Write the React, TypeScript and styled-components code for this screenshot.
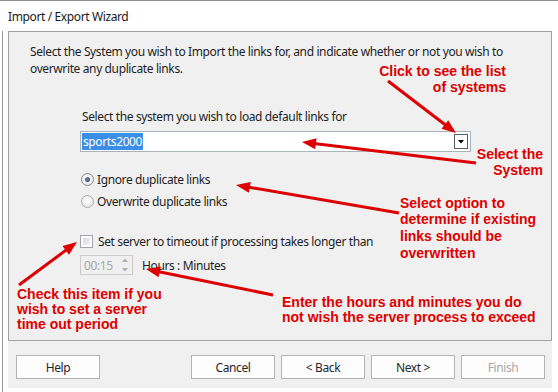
import React from 'react';
import styled, { createGlobalStyle } from 'styled-components';

const UI_FONT = `"Noto Sans", "DejaVu Sans", sans-serif`;
const NOTE_FONT = `"Liberation Sans", Arial, sans-serif`;
const RED = '#dd0000';
const UI_SPACING = '-0.38px';

const Global = createGlobalStyle`
  html, body { margin: 0; padding: 0; background: #ffffff; }
  body { font-family: ${UI_FONT}; }
  * { box-sizing: border-box; }
`;

const Window = styled.div`
  position: relative;
  width: 558px;
  height: 392px;
  border-top: 1px solid #8f8f8f;
  background: #ffffff;
  overflow: hidden;
  font-family: ${UI_FONT};
  font-size: 12px;
  letter-spacing: ${UI_SPACING};
  color: #1e1e1e;
`;

const TitleBar = styled.div`
  height: 30px;
  display: flex;
  align-items: center;
  padding-left: 8px;
  color: #1a1a1a;
`;

const Body = styled.div`
  display: flex;
  height: 361px;
  margin-left: 2px;
  border-left: 1px solid #9a9a9a;
  padding-left: 5px;
`;

const Column = styled.div`
  width: 544px;
  height: 357px;
  display: flex;
  flex-direction: column;
  background: #f0f0f0;
`;

const Panel = styled.div`
  height: 310px;
  border: 1px solid #a0a0a0;
  padding: 11px 0 0 21px;
  display: flex;
  flex-direction: column;
`;

const Intro = styled.p`
  margin: 0;
  line-height: 17px;
  white-space: nowrap;
`;

const Form = styled.div`
  margin-left: 50px;
  display: flex;
  flex-direction: column;
`;

const FieldLabel = styled.div`
  margin-top: 31px;
  margin-left: 2px;
  line-height: 17px;
`;

const Combo = styled.div`
  margin-top: 6px;
  width: 391px;
  height: 21px;
  border: 1px solid #acb2bc;
  background: #ffffff;
  display: flex;
  align-items: center;
  justify-content: space-between;
  padding: 0 2px 0 1px;
`;

const Selected = styled.span`
  background: #3a8ee6;
  color: #ffffff;
  height: 17px;
  line-height: 17px;
  padding: 0 1px;
`;

const DropButton = styled.div`
  width: 14px;
  height: 15px;
  border: 1px solid #5c5c5c;
  background: #ffffff;
  display: flex;
  align-items: center;
  justify-content: center;
`;

const RadioGroup = styled.div`
  margin-top: 16px;
  display: flex;
  flex-direction: column;
`;

const OptionRow = styled.label`
  height: 22px;
  display: flex;
  align-items: center;
  gap: 3px;
  padding-left: 1px;
`;

const Radio = styled.span<{ $on?: boolean }>`
  width: 13px;
  height: 13px;
  border-radius: 50%;
  border: 1px solid ${(p) => (p.$on ? '#8a8c90' : '#a9abae')};
  background: radial-gradient(circle at 50% 40%, #ffffff 0%, #f3f3f3 45%, #dcdcdc 100%);
  display: flex;
  align-items: center;
  justify-content: center;
  &::after {
    content: '';
    display: ${(p) => (p.$on ? 'block' : 'none')};
    width: 5px;
    height: 5px;
    border-radius: 50%;
    background: radial-gradient(circle at 40% 35%, #6f83a8 0%, #2f4470 100%);
  }
`;

const CheckRow = styled.label`
  margin-top: 19px;
  height: 20px;
  display: flex;
  align-items: center;
  gap: 5px;
`;

const CheckBox = styled.span`
  width: 13px;
  height: 13px;
  border: 1px solid #a2a4a7;
  background: #ffffff;
  padding: 2px;
  &::after {
    content: '';
    display: block;
    width: 100%;
    height: 100%;
    background: linear-gradient(135deg, #d9dadc, #f2f2f3);
  }
`;

const SpinRow = styled.div`
  margin-top: 4px;
  height: 20px;
  display: flex;
  align-items: center;
  gap: 9px;
`;

const Spinner = styled.div`
  width: 53px;
  height: 20px;
  border: 1px solid #cccccc;
  background: #f0f0f0;
  display: flex;
  align-items: center;
  justify-content: space-between;
  padding: 0 4px 0 3px;
  color: #a6a6a6;
`;

const Footer = styled.div`
  height: 47px;
  display: flex;
  align-items: flex-start;
  padding: 14px 7px 0 8px;
  gap: 6px;
`;

const Button = styled.button<{ $disabled?: boolean; $push?: boolean }>`
  width: 84px;
  height: 24px;
  border: 1px solid #b3b3b3;
  background: #fdfdfd;
  font-family: ${UI_FONT};
  font-size: 12px;
  letter-spacing: ${UI_SPACING};
  color: ${(p) => (p.$disabled ? '#a8a8a8' : '#262626')};
  padding: 0;
  margin-right: ${(p) => (p.$push ? 'auto' : '0')};
`;

const Note = styled.div<{
  $top: number;
  $left?: number;
  $right?: number;
  $lh: number;
  $align?: 'left' | 'right';
}>`
  position: absolute;
  top: ${(p) => p.$top}px;
  ${(p) => (p.$left !== undefined ? `left: ${p.$left}px;` : '')}
  ${(p) => (p.$right !== undefined ? `right: ${p.$right}px;` : '')}
  font-family: ${NOTE_FONT};
  font-weight: bold;
  font-size: 14px;
  letter-spacing: 0;
  line-height: ${(p) => p.$lh}px;
  color: ${RED};
  text-align: ${(p) => p.$align || 'left'};
  white-space: nowrap;
`;

const Overlay = styled.svg`
  position: absolute;
  left: 0;
  top: 0;
  pointer-events: none;
`;

type Arrow = { x1: number; y1: number; x2: number; y2: number };

const arrows: Arrow[] = [
  { x1: 388, y1: 80, x2: 456, y2: 132 },
  { x1: 476, y1: 162, x2: 302, y2: 141 },
  { x1: 399, y1: 212, x2: 236, y2: 184 },
  { x1: 19, y1: 284, x2: 77, y2: 241 },
  { x1: 273, y1: 294, x2: 146, y2: 268 },
];

function ArrowShape({ a }: { a: Arrow }) {
  const dx = a.x2 - a.x1;
  const dy = a.y2 - a.y1;
  const len = Math.hypot(dx, dy);
  const ux = dx / len;
  const uy = dy / len;
  const headLen = 14;
  const headW = 5.5;
  const bx = a.x2 - ux * headLen;
  const by = a.y2 - uy * headLen;
  const px = -uy;
  const py = ux;
  const pts = [
    `${a.x2},${a.y2}`,
    `${bx + px * headW},${by + py * headW}`,
    `${bx - px * headW},${by - py * headW}`,
  ].join(' ');
  return (
    <g>
      <line x1={a.x1} y1={a.y1} x2={bx + ux * 2} y2={by + uy * 2} stroke={RED} strokeWidth={3} />
      <polygon points={pts} fill={RED} />
    </g>
  );
}

export default function App() {
  return (
    <>
      <Global />
      <Window>
        <TitleBar>Import / Export Wizard</TitleBar>
        <Body>
          <Column>
            <Panel>
              <Intro>
                Select the System you wish to Import the links for, and indicate whether or not you wish to
                <br />
                overwrite any duplicate links.
              </Intro>
              <Form>
                <FieldLabel>Select the system you wish to load default links for</FieldLabel>
                <Combo>
                  <Selected>sports2000</Selected>
                  <DropButton>
                    <svg width="6" height="4" viewBox="0 0 6 4">
                      <polygon points="0,0 6,0 3,3.5" fill="#000" />
                    </svg>
                  </DropButton>
                </Combo>
                <RadioGroup>
                  <OptionRow>
                    <Radio $on />
                    Ignore duplicate links
                  </OptionRow>
                  <OptionRow>
                    <Radio />
                    Overwrite duplicate links
                  </OptionRow>
                </RadioGroup>
                <CheckRow>
                  <CheckBox />
                  Set server to timeout if processing takes longer than
                </CheckRow>
                <SpinRow>
                  <Spinner>
                    <span>00:15</span>
                    <svg width="6" height="16" viewBox="0 0 6 16">
                      <polygon points="0,5 6,5 3,1.5" fill="#b0b0b0" />
                      <polygon points="0,11 6,11 3,14.5" fill="#b0b0b0" />
                    </svg>
                  </Spinner>
                  Hours : Minutes
                </SpinRow>
              </Form>
            </Panel>
            <Footer>
              <Button $push>Help</Button>
              <Button>Cancel</Button>
              <Button>&lt; Back</Button>
              <Button>Next &gt;</Button>
              <Button $disabled>Finish</Button>
            </Footer>
          </Column>
        </Body>

        <Note $top={62} $right={52} $lh={16} $align="right">
          Click to see the list
          <br />
          of systems
        </Note>
        <Note $top={145} $right={15} $lh={16} $align="right">
          Select the
          <br />
          System
        </Note>
        <Note $top={193.5} $left={400} $lh={16.7}>
          Select option to
          <br />
          determine if existing
          <br />
          links should be
          <br />
          overwritten
        </Note>
        <Note $top={286} $left={17} $lh={15}>
          Check this item if you
          <br />
          wish to set a server
          <br />
          time out period
        </Note>
        <Note $top={294.4} $left={282} $lh={15}>
          Enter the hours and minutes you do
          <br />
          not wish the server process to exceed
        </Note>

        <Overlay width={558} height={392} viewBox="0 0 558 392">
          {arrows.map((a, i) => (
            <ArrowShape key={i} a={a} />
          ))}
        </Overlay>
      </Window>
    </>
  );
}
